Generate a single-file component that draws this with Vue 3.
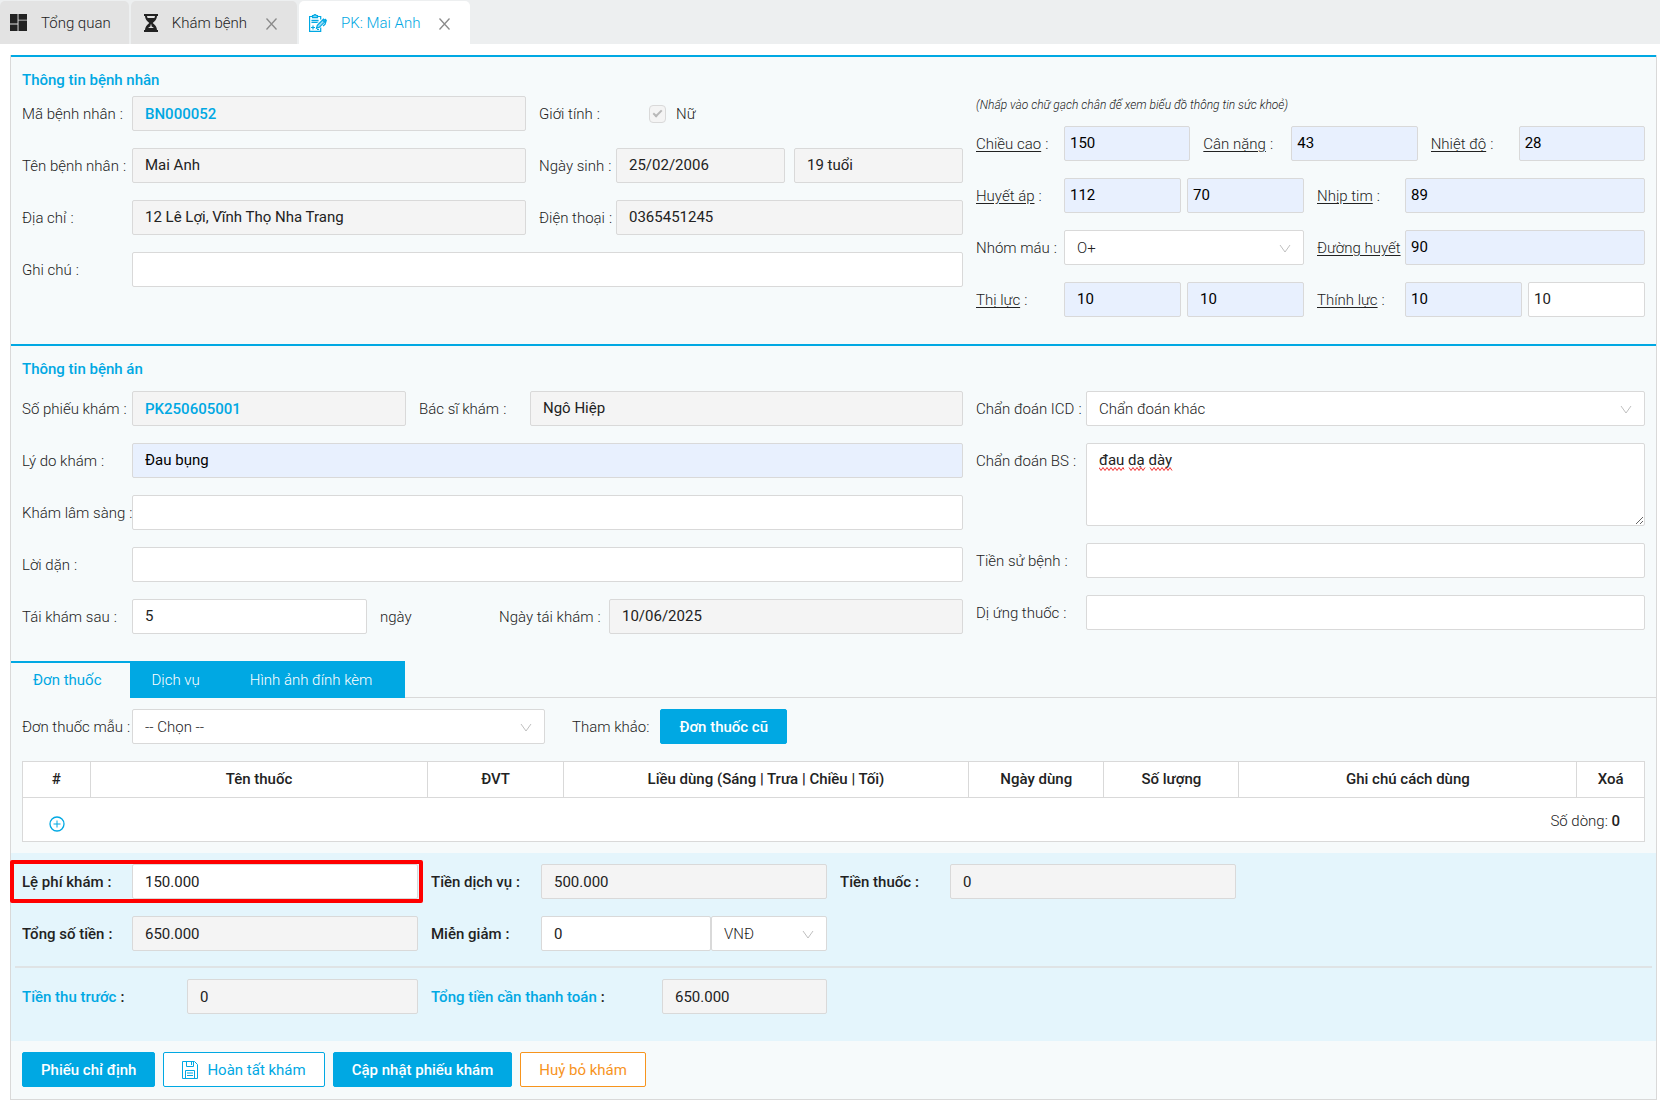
<script setup>
import { ref } from 'vue'

const bloodTypes = ['O+', 'O-', 'A+', 'A-', 'B+', 'B-', 'AB+', 'AB-']
const columns = [
  { title: '#', span: 1 },
  { title: 'Tên thuốc', span: 5 },
  { title: 'ĐVT', span: 2 },
  { title: 'Liều dùng (Sáng | Trưa | Chiều | Tối)', span: 6 },
  { title: 'Ngày dùng', span: 2 },
  { title: 'Số lượng', span: 2 },
  { title: 'Ghi chú cách dùng', span: 5 },
  { title: 'Xoá', span: 1 },
]
const tabs = ['Đơn thuốc', 'Dịch vụ', 'Hình ảnh đính kèm']
const activeTab = ref(0)
const diagnosis = ref('đau dạ dày')
</script>

<template>
  <div class="app">
    <nav class="pages">
      <a href="#" class="page">
        <svg class="page-icon" width="17" height="17" viewBox="0 0 18 18" fill="#222" aria-hidden="true">
          <path d="M0 0h8v10H0zM9 0h9v6H9zM0 11h8v7H0zM9 7h9v11H9z" />
        </svg>
        <span>Tổng quan</span>
      </a>
      <div class="page">
        <svg class="page-icon" width="14" height="18" viewBox="0 0 14 18" aria-hidden="true">
          <path fill="#222" d="M0 0h14v2H0zM0 16h14v2H0zM1 2h12c0 3-2 5.200-4.300 7C11 10.800 13 13 13 16H1c0-3 2-5.200 4.300-7C3 7.200 1 5 1 2z" />
          <path fill="#e3e3e3" d="M3 2h8c-.1.800-.3 1.400-.6 2H3.600C3.300 3.400 3.100 2.800 3 2zM6.500 10.500h1v1.800l2.500 1.700H4l2.500-1.700z" />
        </svg>
        <a href="#">Khám bệnh</a>
        <button type="button" class="close" aria-label="Đóng Khám bệnh">
          <svg width="11" height="12" viewBox="0 0 11 12" stroke="#8a8a8a" stroke-width="1.300"><path d="M.5.500l10 11M10.500.500l-10 11" /></svg>
        </button>
      </div>
      <div class="page current">
        <svg class="page-icon" width="18" height="18" viewBox="0 0 18 18" fill="none" stroke="#00a8e3" stroke-width="1.200" aria-hidden="true">
          <path fill="#9bdcf5" stroke="none" d="M4 1h4.500v2.500H4zM2.500 5.500h7v3.300h-7zM8 11.500l6-6 2 2-6 6-2 .5z" />
          <path d="M3.500 2.500H.6v14.900h11.100v-4M9 2.500h2.700v3M3.500 1.700h1.300c.2-1.500 2.200-1.500 2.400 0h1.300v2h-5z" />
          <path d="M2.500 6.500h7M2.500 8.500h6M4 11.500v4M2 13.500h4M8 15.500h2" />
          <path d="M7.500 14.300l.8-3 6.200-6.200 2 2-6.200 6.200zM13.500 6l2 2M16 5l1.300 1.300-1.300 4-2 1.700" />
        </svg>
        <a href="#">PK: Mai Anh</a>
        <button type="button" class="close" aria-label="Đóng PK: Mai Anh">
          <svg width="11" height="12" viewBox="0 0 11 12" stroke="#8a8a8a" stroke-width="1.300"><path d="M.5.500l10 11M10.500.500l-10 11" /></svg>
        </button>
      </div>
    </nav>

    <main class="panel">
      <section class="section">
        <div class="half">
          <h2>Thông tin bệnh nhân</h2>
          <div class="rows">
            <div class="row patient">
              <div class="field"><label for="code">Mã bệnh nhân</label><input id="code" class="code" value="BN000052" disabled /></div>
              <div class="field narrow">
                <span class="label">Giới tính</span>
                <label class="check"><input type="checkbox" checked disabled />Nữ</label>
              </div>
            </div>
            <div class="row patient">
              <div class="field"><label for="name">Tên bệnh nhân</label><input id="name" value="Mai Anh" disabled /></div>
              <div class="field narrow">
                <label for="dob">Ngày sinh</label>
                <div class="pair wide"><input id="dob" value="25/02/2006" disabled /><input aria-label="Tuổi" value="19 tuổi" disabled /></div>
              </div>
            </div>
            <div class="row patient">
              <div class="field"><label for="address">Địa chỉ</label><input id="address" value="12 Lê Lợi, Vĩnh Thọ Nha Trang" disabled /></div>
              <div class="field narrow"><label for="phone">Điện thoại</label><input id="phone" value="0365451245" disabled /></div>
            </div>
            <div class="field"><label for="note">Ghi chú</label><input id="note" /></div>
          </div>
        </div>

        <div class="half vitals">
          <p class="hint">(Nhấp vào chữ gạch chân để xem biểu đồ thông tin sức khoẻ)</p>
          <div class="rows">
            <div class="row thirds">
              <div class="field"><label for="height"><a href="#">Chiều cao</a></label><input id="height" class="filled" value="150" /></div>
              <div class="field"><label for="weight"><a href="#">Cân nặng</a></label><input id="weight" class="filled" value="43" /></div>
              <div class="field"><label for="temp"><a href="#">Nhiệt độ</a></label><input id="temp" class="filled" value="28" /></div>
            </div>
            <div class="row halves">
              <div class="field">
                <label for="bp"><a href="#">Huyết áp</a></label>
                <div class="pair"><input id="bp" class="filled" value="112" /><input class="filled" aria-label="Huyết áp tâm trương" value="70" /></div>
              </div>
              <div class="field"><label for="pulse"><a href="#">Nhịp tim</a></label><input id="pulse" class="filled" value="89" /></div>
            </div>
            <div class="row halves">
              <div class="field">
                <label for="blood">Nhóm máu</label>
                <div class="select">
                  <select id="blood"><option v-for="b in bloodTypes" :key="b">{{ b }}</option></select>
                  <svg class="arrow" width="12" height="9" viewBox="0 0 12 9"><path d="M1 1l5 7 5-7" /></svg>
                </div>
              </div>
              <div class="field bare"><label for="sugar"><a href="#">Đường huyết</a></label><input id="sugar" class="filled" value="90" /></div>
            </div>
            <div class="row halves">
              <div class="field">
                <label for="eye"><a href="#">Thị lực</a></label>
                <div class="pair"><input id="eye" class="filled roomy" value="10" /><input class="filled roomy" aria-label="Thị lực mắt phải" value="10" /></div>
              </div>
              <div class="field">
                <label for="ear"><a href="#">Thính lực</a></label>
                <div class="pair"><input id="ear" class="filled" value="10" /><input aria-label="Thính lực tai phải" value="10" /></div>
              </div>
            </div>
          </div>
        </div>
      </section>

      <section class="section record">
        <div class="half">
          <h2>Thông tin bệnh án</h2>
          <div class="rows">
            <div class="row visit">
              <div class="field"><label for="visit">Số phiếu khám</label><input id="visit" class="code" value="PK250605001" disabled /></div>
              <div class="field"><label for="doctor">Bác sĩ khám</label><input id="doctor" value="Ngô Hiệp" disabled /></div>
            </div>
            <div class="field"><label for="reason">Lý do khám</label><input id="reason" class="filled" value="Đau bụng" /></div>
            <div class="field"><label for="clinical">Khám lâm sàng</label><input id="clinical" /></div>
            <div class="field"><label for="advice">Lời dặn</label><input id="advice" /></div>
            <div class="row return">
              <div class="field"><label for="again">Tái khám sau</label><input id="again" value="5" /></div>
              <span class="unit">ngày</span>
              <div class="field"><label for="again-date">Ngày tái khám</label><input id="again-date" value="10/06/2025" disabled /></div>
            </div>
          </div>
        </div>

        <div class="half rows diagnosis">
          <div class="field">
            <label for="icd">Chẩn đoán ICD</label>
            <div class="select">
              <select id="icd"><option>Chẩn đoán khác</option></select>
              <svg class="arrow" width="12" height="9" viewBox="0 0 12 9"><path d="M1 1l5 7 5-7" /></svg>
            </div>
          </div>
          <div class="field">
            <label for="bs">Chẩn đoán BS</label>
            <div class="spelled">
              <textarea id="bs" v-model="diagnosis"></textarea>
              <svg class="squiggle" width="76" height="4" viewBox="0 0 76 4" aria-hidden="true">
                <path d="M0 .5l2 3 2-3 2 3 2-3 2 3 2-3 2 3 2-3 2 3 2-3 2 3 2-3 1 2M30 .5l2 3 2-3 2 3 2-3 2 3 2-3 2 3 2-3M51 .5l2 3 2-3 2 3 2-3 2 3 2-3 2 3 2-3 2 3 2-3 2 3" />
              </svg>
            </div>
          </div>
          <div class="field"><label for="history">Tiền sử bệnh</label><input id="history" /></div>
          <div class="field"><label for="allergy">Dị ứng thuốc</label><input id="allergy" /></div>
        </div>
      </section>

      <div class="tabs" role="tablist">
        <button v-for="(tab, i) in tabs" :key="tab" type="button" role="tab" class="tab" :class="{ active: i === activeTab }" :aria-selected="i === activeTab" @click="activeTab = i">{{ tab }}</button>
      </div>

      <section class="prescription">
        <div class="template-row">
          <div class="field template">
            <label for="template">Đơn thuốc mẫu</label>
            <div class="select">
              <select id="template"><option>-- Chọn --</option></select>
              <svg class="arrow" width="12" height="9" viewBox="0 0 12 9"><path d="M1 1l5 7 5-7" /></svg>
            </div>
          </div>
          <span class="reference">Tham khảo:</span>
          <button type="button" class="btn primary">Đơn thuốc cũ</button>
        </div>
        <table>
          <colgroup><col v-for="c in columns" :key="c.title" :style="{ width: (c.span / 24) * 100 + '%' }" /></colgroup>
          <thead><tr><th v-for="c in columns" :key="c.title">{{ c.title }}</th></tr></thead>
          <tbody>
            <tr>
              <td>
                <button type="button" class="add" aria-label="Thêm thuốc">
                  <svg width="16" height="16" viewBox="0 0 16 16" fill="none" stroke="#00a8e3"><circle cx="8" cy="8" r="7" stroke-width="1.300" /><path d="M4.500 8h7M8 4.500v7" /></svg>
                </button>
              </td>
              <td colspan="7" class="count">Số dòng: <b>0</b></td>
            </tr>
          </tbody>
        </table>
      </section>

      <section class="fees">
        <div class="row fee-grid">
          <div class="field highlight"><label for="fee">Lệ phí khám</label><input id="fee" value="150.000" /></div>
          <div class="field"><label for="service">Tiền dịch vụ</label><input id="service" value="500.000" disabled /></div>
          <div class="field"><label for="medicine">Tiền thuốc</label><input id="medicine" value="0" disabled /></div>
        </div>
        <div class="row fee-grid">
          <div class="field"><label for="total">Tổng số tiền</label><input id="total" value="650.000" disabled /></div>
          <div class="field">
            <label for="discount">Miễn giảm</label>
            <div class="discount">
              <input id="discount" value="0" />
              <div class="select">
                <select aria-label="Đơn vị giảm"><option>VNĐ</option><option>%</option></select>
                <svg class="arrow" width="12" height="9" viewBox="0 0 12 9"><path d="M1 1l5 7 5-7" /></svg>
              </div>
            </div>
          </div>
        </div>
        <hr />
        <div class="row fee-grid sums">
          <div class="field"><label for="prepaid"><span>Tiền thu trước</span></label><input id="prepaid" value="0" disabled /></div>
          <div class="field due"><label for="due"><span>Tổng tiền cần thanh toán</span></label><input id="due" value="650.000" disabled /></div>
        </div>
      </section>

      <footer class="actions">
        <button type="button" class="btn primary">Phiếu chỉ định</button>
        <button type="button" class="btn outline">
          <svg width="16" height="18" viewBox="0 0 16 18" fill="none" stroke="#00a8e3" aria-hidden="true"><path d="M.5.500h12l3 3v14H.500zM4.500.500v5h7v-5M9.500 1v3M3.500 17.500v-8h9v8M5 12h6M5 14.500h6" /></svg>
          Hoàn tất khám
        </button>
        <button type="button" class="btn primary">Cập nhật phiếu khám</button>
        <button type="button" class="btn warn">Huỷ bỏ khám</button>
      </footer>
    </main>
  </div>
</template>

<style>
body {
  background: #fff;
}
</style>

<style scoped>
.app,
.app *,
.app *::before,
.app *::after {
  box-sizing: border-box;
}
.app {
  color: #222;
  font: 300 15px/20px Roboto, "Noto Sans", sans-serif;
}
a {
  color: inherit;
  text-decoration: none;
}

.pages {
  display: flex;
  gap: 2px;
  height: 44px;
  padding-top: 1px;
  background: #edeff0;
}
.page {
  display: flex;
  align-items: center;
  padding: 0 18px 0 13px;
  border-radius: 5px 5px 0 0;
  background: #e3e3e3;
}
.page:first-child {
  padding-left: 10px;
}
.page-icon {
  margin-right: 14px;
}
.page.current {
  padding-left: 10px;
  background: #fff;
  color: #00a8e3;
}
.close {
  display: flex;
  margin-left: 17px;
  padding: 2px 2px 0;
  border: 0;
  background: none;
}

.panel {
  margin: 11px 3px 0 10px;
  border: 1px solid #d9d9d9;
  border-top: 0;
  background: #f6fafb;
}
.section {
  display: grid;
  grid-template-columns: minmax(0, 941fr) minmax(0, 669fr);
  gap: 13px;
  padding: 7px 11px 27px;
  border-top: 2px solid #00a8e3;
}
h2 {
  margin: 0;
  color: #00a8e3;
  font-size: 15px;
  font-weight: 500;
  line-height: 32px;
}
.record h2 {
  margin-bottom: 6px;
}
.hint {
  margin: 31px 0 11px;
  font-size: 12px;
  font-style: italic;
}
.rows {
  display: flex;
  flex-direction: column;
  gap: 17px;
}
.diagnosis {
  padding-top: 38px;
}
.row {
  display: grid;
  gap: 13px;
}
.patient {
  grid-template-columns: minmax(0, 504fr) minmax(0, 424fr);
}
.halves {
  grid-template-columns: repeat(2, minmax(0, 1fr));
}
.thirds {
  grid-template-columns: repeat(3, minmax(0, 1fr));
}
.visit {
  grid-template-columns: minmax(0, 384fr) minmax(0, 544fr);
}
.return {
  grid-template-columns: minmax(0, 345fr) minmax(0, 106fr) minmax(0, 464fr);
}
.field {
  display: flex;
  min-width: 0;
}
.field > label:not(.check),
.label {
  flex: 0 0 110px;
  height: 35px;
  overflow: hidden;
  line-height: 36px;
  white-space: nowrap;
}
.visit .field + .field > label {
  flex-basis: 111px;
}
.field > label:not(.check)::after,
.label::after {
  content: ":";
  margin-left: 4px;
}
.bare > label:not(.check)::after {
  content: none;
}
.narrow > label:not(.check),
.narrow > .label {
  flex-basis: 77px;
}
.vitals .field > label {
  flex-basis: 88px;
}
.field label a {
  text-decoration: underline;
  text-underline-offset: 2px;
}
.unit {
  height: 35px;
  line-height: 36px;
}

input:not([type="checkbox"]),
select,
textarea {
  display: block;
  flex: 1 1 0;
  width: 100%;
  min-width: 0;
  height: 35px;
  margin: 0;
  padding: 0 12px;
  border: 1px solid #d9d9d9;
  border-radius: 2px;
  outline: 0;
  background: #fff;
  color: #222;
  font: 400 15px/20px Roboto, "Noto Sans", sans-serif;
}
.section .half input:not([type="checkbox"], .code) {
  padding-bottom: 2px;
}
input:not([type="checkbox"]):disabled {
  background: #f4f4f4;
}
input.filled:not([type="checkbox"]) {
  background: #e8f0fe;
  color: #000;
}
input.code:not([type="checkbox"]) {
  color: #00a8e3;
  font-weight: 500;
}
.vitals input:not([type="checkbox"]) {
  padding: 0 5px;
}
.vitals input.roomy:not([type="checkbox"]) {
  padding: 0 12px 2px;
}
textarea {
  height: 83px;
  padding: 6px 12px;
  resize: vertical;
}
.pair {
  display: flex;
  flex: 1;
  gap: 6px;
  min-width: 0;
}
.pair.wide {
  gap: 9px;
}
.check {
  display: flex;
  align-items: center;
  gap: 10px;
  margin-left: 33px;
}
.check input {
  position: relative;
  width: 17px;
  height: 18px;
  margin: 0;
  border: 1px solid #d9d9d9;
  border-radius: 4px;
  appearance: none;
  background: #f4f4f4;
}
.check input:checked::after {
  content: "";
  position: absolute;
  top: 2px;
  left: 5px;
  width: 5px;
  height: 9px;
  border: solid #b8b8b8;
  border-width: 0 2px 2px 0;
  transform: rotate(45deg);
}
.select,
.spelled {
  position: relative;
  flex: 1;
  min-width: 0;
}
select {
  appearance: none;
  font-weight: 300;
}
.arrow {
  position: absolute;
  top: 14px;
  right: 13px;
  fill: none;
  stroke: #bfbfbf;
  pointer-events: none;
}
.squiggle {
  position: absolute;
  top: 24px;
  left: 13px;
  fill: none;
  stroke: #f03030;
  pointer-events: none;
}

.tabs {
  display: flex;
  height: 37px;
  border-bottom: 1px solid #d9d9d9;
}
.tab {
  height: 37px;
  padding: 0 28px 2px 22px;
  border: 0;
  border-top: 2px solid #00a8e3;
  background: #00a8e3;
  color: #fff;
  font: 300 15px/20px Roboto, "Noto Sans", sans-serif;
}
.tab:last-child {
  padding-right: 33px;
}
.tab.active {
  background: #f6fafb;
  color: #00a8e3;
  font-weight: 400;
}

.prescription {
  padding: 11px;
}
.template-row {
  display: flex;
  align-items: center;
  margin-bottom: 17px;
}
.template {
  width: 523px;
}
.reference {
  margin: 0 11px 0 27px;
}
table {
  width: 100%;
  border: 1px solid #d9d9d9;
  border-collapse: collapse;
  table-layout: fixed;
  background: #fff;
}
th {
  height: 36px;
  padding: 0 0 2px;
  border: 1px solid #d9d9d9;
  font-weight: 500;
}
td {
  height: 44px;
  padding: 3px 0 0;
}
.add {
  display: block;
  margin: 5px auto 0;
  padding: 0;
  border: 0;
  background: none;
}
.add svg {
  display: block;
}
.count {
  padding-right: 24px;
  text-align: right;
}
b {
  font-weight: 500;
}

.fees {
  display: flex;
  flex-direction: column;
  gap: 17px;
  padding: 11px 11px 27px;
  background: #e4f5fc;
}
.fee-grid {
  grid-template-columns: repeat(4, minmax(0, 1fr));
}
.fees label {
  font-weight: 500;
}
.fees label span {
  color: #00a8e3;
}
.fees .sums .field > label {
  flex-basis: 165px;
}
.fees .sums .due > label {
  flex-basis: 231px;
}
hr {
  height: 2px;
  margin: -2px -7px -6px;
  border: 0;
  background: #dfe3e5;
}
.discount {
  display: grid;
  flex: 1;
  grid-template-columns: minmax(0, 170fr) minmax(0, 116fr);
  min-width: 0;
}
.highlight {
  position: relative;
}
.highlight::after {
  content: "";
  position: absolute;
  inset: -4px -5px -4px -12px;
  border: 4px solid #f00;
  border-radius: 2px;
  pointer-events: none;
}

.actions {
  display: flex;
  flex-wrap: wrap;
  gap: 8px;
  padding: 11px 11px 12px;
}
.btn {
  display: flex;
  align-items: center;
  gap: 9px;
  height: 35px;
  padding: 0 18px;
  border: 1px solid #00a8e3;
  border-radius: 2px;
  background: #fff;
  color: #00a8e3;
  font: 400 15px/20px Roboto, "Noto Sans", sans-serif;
}
.primary {
  background: #00a8e3;
  color: #fff;
  font-weight: 500;
}
.warn {
  border-color: #f7941d;
  color: #f7941d;
}
</style>
